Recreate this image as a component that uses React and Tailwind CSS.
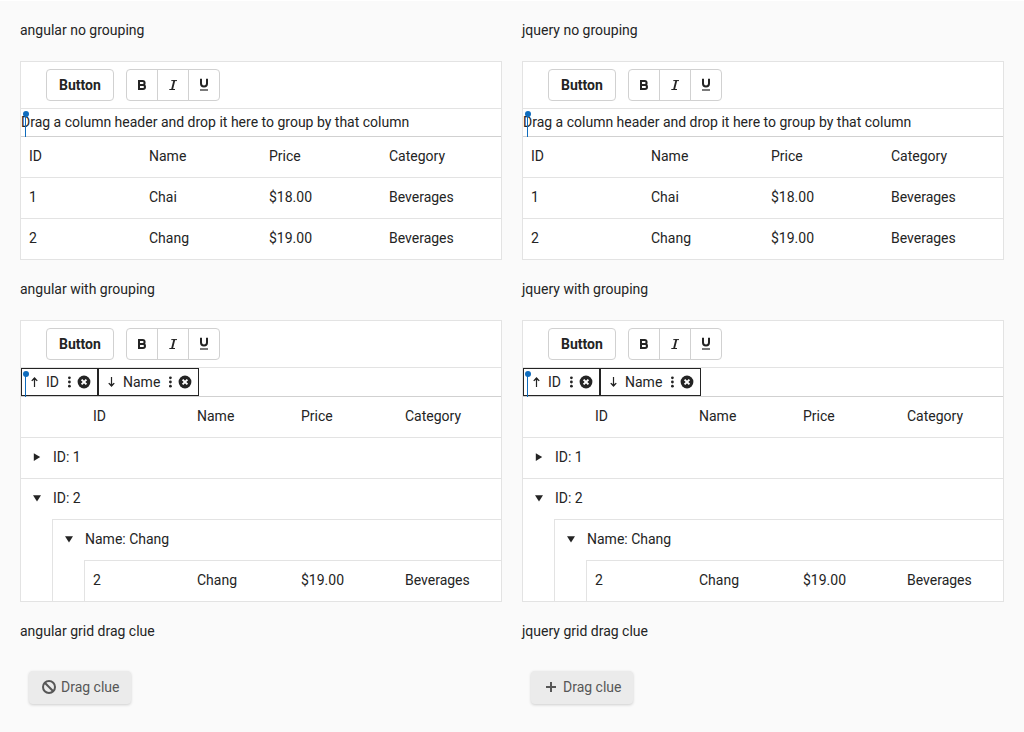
import React from 'react';

const PRODUCTS = [
  { id: 1, name: 'Chai', price: '$18.00', category: 'Beverages' },
  { id: 2, name: 'Chang', price: '$19.00', category: 'Beverages' },
];
const COLUMNS = ['ID', 'Name', 'Price', 'Category'];

function Icon({ children }) {
  return (
    <svg viewBox="0 0 16 16" className="h-4 w-4 shrink-0" fill="currentColor" aria-hidden="true">
      {children}
    </svg>
  );
}

const BoldIcon = () => (
  <Icon>
    <path d="M5 4h3.6a2 2 0 0 1 0 4H5zM5 8h4a2 2 0 0 1 0 4H5z" fill="none" stroke="currentColor" strokeWidth="2" />
  </Icon>
);
const ItalicIcon = () => (
  <Icon>
    <path d="M6.3 3.6h5.7M4.3 12.5h5.7" fill="none" stroke="currentColor" strokeWidth="1" />
    <path d="M9.4 3.3L7 12.7" fill="none" stroke="currentColor" strokeWidth="1.8" />
  </Icon>
);
const UnderlineIcon = () => (
  <Icon>
    <path d="M5 1.8v4.6a3 3 0 0 0 6 0V1.8" fill="none" stroke="currentColor" strokeWidth="2" />
    <path d="M4 12.5h8v1H4z" />
    <path d="M4 12h8v2H4z" opacity="0.2" />
  </Icon>
);
const ArrowUp = () => (
  <Icon>
    <path d="M8.5 13V4" stroke="currentColor" strokeWidth="1.2" />
    <path d="M8.5 3l3.2 3.6-.8.6-2.4-1.6-2.4 1.6-.8-.6z" />
  </Icon>
);
const ArrowDown = () => (
  <Icon>
    <path d="M8.5 3v9" stroke="currentColor" strokeWidth="1.2" />
    <path d="M8.5 13L5.3 9.4l.8-.6 2.4 1.6 2.4-1.6.8.6z" />
  </Icon>
);
const CaretRight = () => (
  <Icon>
    <path d="M4.8 4.2l6.4 3.9-6.4 3.9z" />
  </Icon>
);
const CaretDown = () => (
  <Icon>
    <path d="M4 5.2h8l-4 6.2z" />
  </Icon>
);
const XCircle = () => (
  <Icon>
    <circle cx="8" cy="8" r="6.4" />
    <path d="M5.6 5.6l4.8 4.8M10.4 5.6l-4.8 4.8" stroke="white" strokeWidth="2" />
  </Icon>
);
const CancelIcon = () => (
  <Icon>
    <circle cx="8" cy="8" r="6" fill="none" stroke="currentColor" strokeWidth="2" />
    <path d="M3.8 3.8l8.4 8.4" stroke="currentColor" strokeWidth="2" />
  </Icon>
);
const PlusIcon = () => (
  <Icon>
    <path d="M8 3v10M3 8h10" stroke="currentColor" strokeWidth="2" />
  </Icon>
);

function Toolbar() {
  const tools = [
    ['Bold', BoldIcon, 'rounded-l'],
    ['Italic', ItalicIcon, '-ml-px'],
    ['Underline', UnderlineIcon, '-ml-px rounded-r'],
  ];
  return (
    <div role="toolbar" aria-label="Grid tools" className="flex items-center gap-3 border-b border-[#e3e3e3] py-[7px] pl-[25px] pr-2">
      <button type="button" className="h-8 rounded border border-[#d1d1d1] bg-white px-3 font-bold leading-5">
        Button
      </button>
      <div className="flex">
        {tools.map(([label, Glyph, shape]) => (
          <button key={label} type="button" aria-label={label} className={`grid h-8 w-8 place-items-center border border-[#d1d1d1] bg-white ${shape}`}>
            <Glyph />
          </button>
        ))}
      </div>
    </div>
  );
}

function DropCue() {
  return (
    <svg viewBox="0 0 6 26" className="absolute bottom-[-1px] left-0.5 h-[26px] w-1.5" aria-hidden="true">
      <circle cx="3" cy="3" r="3" fill="#0f6cbd" />
      <path d="M2.5 3v23" stroke="#0f6cbd" strokeWidth="1" />
    </svg>
  );
}

function Chip({ label, descending }) {
  return (
    <div className="flex h-7 items-center border border-[#242424] pb-px pl-1 pr-[5px]">
      {descending ? <ArrowDown /> : <ArrowUp />}
      <span className="ml-1 mr-2">{label}</span>
      <button type="button" aria-label={`${label} options`} className="flex">
        <svg viewBox="0 0 4 16" className="h-4 w-1" fill="currentColor" aria-hidden="true">
          <circle cx="2.4" cy="3.8" r="1.4" />
          <circle cx="2.4" cy="8" r="1.4" />
          <circle cx="2.4" cy="12.2" r="1.4" />
        </svg>
      </button>
      <button type="button" aria-label={`Remove ${label}`} className="ml-[5px] flex">
        <XCircle />
      </button>
    </div>
  );
}

function GroupHeader({ grouped }) {
  return (
    <div className="relative flex border-b border-[#d1d1d1]">
      {grouped ? (
        <>
          <Chip label="ID" />
          <Chip label="Name" descending />
        </>
      ) : (
        <div className="pb-1 pt-[3px]">Drag a column header and drop it here to group by that column</div>
      )}
      <DropCue />
    </div>
  );
}

function HeaderCells() {
  return COLUMNS.map((column) => (
    <th key={column} scope="col" className="h-10 px-2 pb-0.5 text-left font-normal">
      {column}
    </th>
  ));
}

const CELL = 'h-[41px] border-t border-[#e3e3e3] px-2 pb-0.5';
const LABEL_CELL = 'h-[41px] border-t border-[#e3e3e3] pb-0.5';
const INDENT = 'border-r border-[#e3e3e3]';

function ProductCells({ product }) {
  return Object.entries(product).map(([key, value]) => (
    <td key={key} className={CELL}>
      {value}
    </td>
  ));
}

function ToggleCell({ open, label }) {
  return (
    <td className={CELL}>
      <button type="button" aria-expanded={open} aria-label={label} className="flex">
        {open ? <CaretDown /> : <CaretRight />}
      </button>
    </td>
  );
}

function FlatTable() {
  return (
    <table className="w-full table-fixed border-separate border-spacing-0">
      <thead>
        <tr>
          <HeaderCells />
        </tr>
      </thead>
      <tbody>
        {PRODUCTS.map((product) => (
          <tr key={product.id}>
            <ProductCells product={product} />
          </tr>
        ))}
      </tbody>
    </table>
  );
}

function GroupedTable() {
  const chang = PRODUCTS[1];
  return (
    <table className="w-full table-fixed border-separate border-spacing-0">
      <colgroup>
        <col className="w-8" />
        <col className="w-8" />
        <col />
        <col />
        <col />
        <col />
      </colgroup>
      <thead>
        <tr>
          <td />
          <td />
          <HeaderCells />
        </tr>
      </thead>
      <tbody>
        <tr>
          <ToggleCell open={false} label="Expand ID: 1" />
          <td colSpan={5} className={LABEL_CELL}>ID: 1</td>
        </tr>
        <tr>
          <ToggleCell open label="Collapse ID: 2" />
          <td colSpan={5} className={LABEL_CELL}>ID: 2</td>
        </tr>
        <tr>
          <td className={INDENT} />
          <ToggleCell open label="Collapse Name: Chang" />
          <td colSpan={4} className={LABEL_CELL}>Name: Chang</td>
        </tr>
        <tr>
          <td className={INDENT} />
          <td className={INDENT} />
          <ProductCells product={chang} />
        </tr>
      </tbody>
    </table>
  );
}

function Grid({ grouped = false }) {
  return (
    <div className="border border-[#e3e3e3] bg-white">
      <Toolbar />
      <GroupHeader grouped={grouped} />
      {grouped ? <GroupedTable /> : <FlatTable />}
    </div>
  );
}

function DragClue({ allowed = false }) {
  return (
    <div className="p-[9px]">
      <div className="inline-flex h-[33px] items-center rounded bg-[#ebebeb] px-3 pb-px text-[#575757] shadow-[0_1px_3px_rgba(0,0,0,0.18)]">
        {allowed ? <PlusIcon /> : <CancelIcon />}
        <span className="ml-1">Drag clue</span>
      </div>
    </div>
  );
}

function Section({ title, children }) {
  return (
    <section className="flex min-w-0 flex-col gap-[21px]">
      <h2>{title}</h2>
      <div>{children}</div>
    </section>
  );
}

export default function App() {
  return (
    <main className="min-h-screen border-t border-white bg-[#fafafa] px-5 py-[19px] font-['Roboto',sans-serif] text-sm leading-5 text-[#242424]">
      <div className="grid grid-cols-2 gap-x-5 gap-y-[19px]">
        <Section title="angular no grouping"><Grid /></Section>
        <Section title="jquery no grouping"><Grid /></Section>
        <Section title="angular with grouping"><Grid grouped /></Section>
        <Section title="jquery with grouping"><Grid grouped /></Section>
        <Section title="angular grid drag clue"><DragClue /></Section>
        <Section title="jquery grid drag clue"><DragClue allowed /></Section>
      </div>
    </main>
  );
}
